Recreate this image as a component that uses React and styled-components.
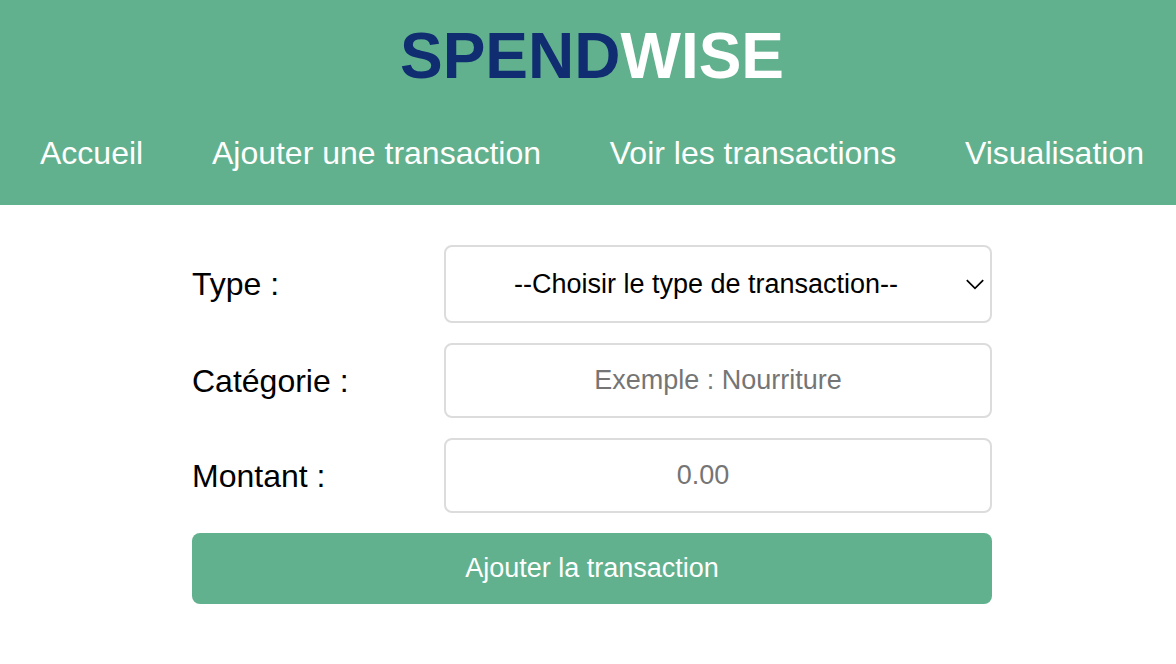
import React from "react";
import styled, { createGlobalStyle } from "styled-components";

const GlobalStyle = createGlobalStyle`
  * { box-sizing: border-box; }
  body {
    margin: 0;
    background: #fff;
    color: #000;
    font-family: "Liberation Sans", Arial, sans-serif;
  }
`;

const Header = styled.header`
  background: #62b18e;
  padding: 16px 32px 32px 40px;
`;

const Title = styled.h1`
  margin: 0;
  color: #fff;
  font-size: 64px;
  line-height: 80px;
  text-align: center;
`;

const TitleAccent = styled.span`
  color: #0f2d70;
`;

const Nav = styled.nav`
  display: flex;
  justify-content: space-between;
  margin-top: 38px;
`;

const NavLink = styled.a`
  color: #fff;
  font-size: 32px;
  line-height: 39px;
  text-decoration: none;
  white-space: nowrap;
`;

const Main = styled.main`
  padding: 40px 32px 40px 40px;
`;

const Form = styled.form`
  display: flex;
  flex-direction: column;
  gap: 20px;
  max-width: 800px;
  margin: 0 auto;
`;

const Field = styled.div`
  display: flex;
  align-items: center;
  justify-content: space-between;
`;

const Label = styled.label`
  font-size: 32px;
  line-height: 40px;
`;

const control = `
  display: block;
  width: 100%;
  margin: 0;
  border: 2px solid #dcdcdc;
  border-radius: 8px;
  background: #fff;
  color: #000;
  font-family: inherit;
  font-size: 27px;
  text-align: center;
`;

const ControlBox = styled.div`
  position: relative;
  width: 548px;
`;

const Select = styled.select`
  ${control}
  height: 78px;
  padding: 0 44px 0 20px;
  appearance: none;
  text-align-last: center;
`;

const Chevron = styled.svg`
  position: absolute;
  top: 32px;
  right: 8px;
  width: 18px;
  height: 14px;
  pointer-events: none;
`;

const Input = styled.input`
  ${control}
  height: 75px;
  padding: 0 ${(p) => (p.type === "number" ? "50px" : "20px")} 0 20px;
  appearance: textfield;
  &::placeholder { color: #757575; opacity: 1; }
  &::-webkit-inner-spin-button { appearance: none; margin: 0; }
`;

const Submit = styled.button`
  height: 71px;
  border: 0;
  border-radius: 8px;
  background: #62b18e;
  color: #fff;
  font-family: inherit;
  font-size: 27px;
`;

const links = ["Accueil", "Ajouter une transaction", "Voir les transactions", "Visualisation"];

export default function App() {
  return (
    <>
      <GlobalStyle />
      <Header>
        <Title><TitleAccent>SPEND</TitleAccent>WISE</Title>
        <Nav>
          {links.map((text) => <NavLink href="#" key={text}>{text}</NavLink>)}
        </Nav>
      </Header>
      <Main>
        <Form onSubmit={(e) => e.preventDefault()}>
          <Field>
            <Label htmlFor="type">Type :</Label>
            <ControlBox>
              <Select id="type" defaultValue="">
                <option value="">--Choisir le type de transaction--</option>
                <option value="revenu">Revenu</option>
                <option value="depense">Dépense</option>
              </Select>
              <Chevron viewBox="0 0 18 14" fill="none" stroke="#000" strokeWidth="1.7" aria-hidden="true">
                <path d="M0.8 3.2L9 11.4l8.2-8.2" />
              </Chevron>
            </ControlBox>
          </Field>
          <Field>
            <Label htmlFor="category">Catégorie :</Label>
            <ControlBox>
              <Input id="category" type="text" placeholder="Exemple : Nourriture" />
            </ControlBox>
          </Field>
          <Field>
            <Label htmlFor="amount">Montant :</Label>
            <ControlBox>
              <Input id="amount" type="number" step="0.01" placeholder="0.00" />
            </ControlBox>
          </Field>
          <Submit type="submit">Ajouter la transaction</Submit>
        </Form>
      </Main>
    </>
  );
}
